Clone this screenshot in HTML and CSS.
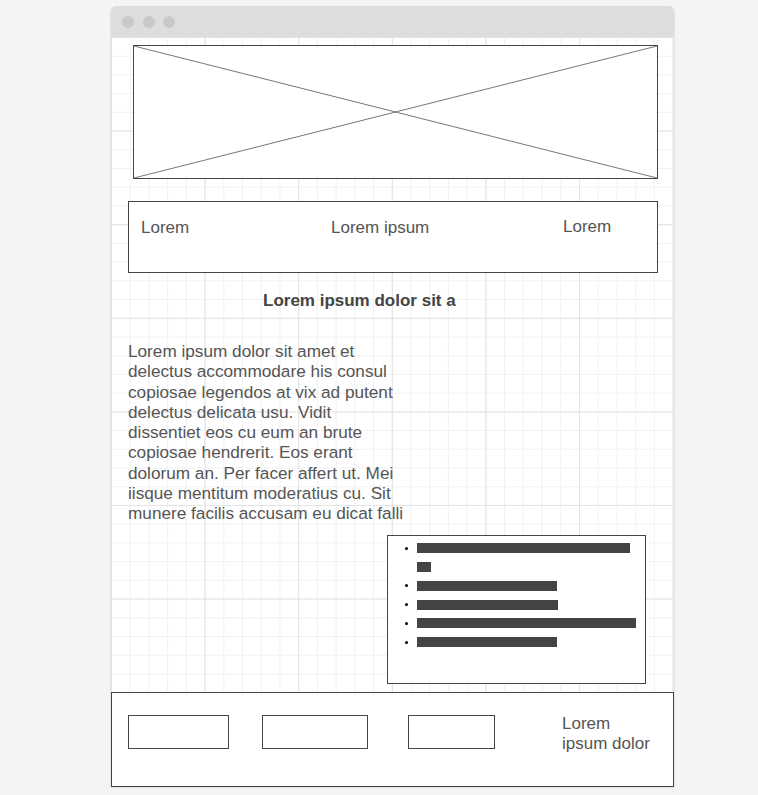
FILE: index.html
```html
<!DOCTYPE html>
<html lang="en">
<head>
<meta charset="utf-8">
<title>Wireframe</title>
<link rel="stylesheet" href="styles.css">
</head>
<body>
<div class="window">
  <div class="titlebar">
    <span class="dot"></span><span class="dot"></span><span class="dot"></span>
  </div>
  <div class="canvas">
    <div class="image-ph">
      <svg viewBox="0 0 100 100" preserveAspectRatio="none" aria-hidden="true">
        <line x1="0" y1="0" x2="100" y2="100" vector-effect="non-scaling-stroke"/>
        <line x1="100" y1="0" x2="0" y2="100" vector-effect="non-scaling-stroke"/>
      </svg>
    </div>
    <nav class="nav">
      <span class="nav-a">Lorem</span>
      <span class="nav-b">Lorem ipsum</span>
      <span class="nav-c">Lorem</span>
    </nav>
    <h1 class="heading">Lorem ipsum dolor sit a</h1>
    <p class="para">Lorem ipsum dolor sit amet et<br>delectus accommodare his consul<br>copiosae legendos at vix ad putent<br>delectus delicata usu. Vidit<br>dissentiet eos cu eum an brute<br>copiosae hendrerit. Eos erant<br>dolorum an. Per facer affert ut. Mei<br>iisque mentitum moderatius cu. Sit<br>munere facilis accusam eu dicat falli</p>
    <ul class="list">
      <li><div class="bars"><span class="bar" style="width:213px"></span><span class="bar" style="width:14px"></span></div></li>
      <li><div class="bars"><span class="bar" style="width:140px"></span></div></li>
      <li><div class="bars"><span class="bar" style="width:141px"></span></div></li>
      <li><div class="bars"><span class="bar" style="width:219px"></span></div></li>
      <li><div class="bars"><span class="bar" style="width:140px"></span></div></li>
    </ul>
  </div>
  <footer class="footer">
    <div class="fbox fbox-1"></div>
    <div class="fbox fbox-2"></div>
    <div class="fbox fbox-3"></div>
    <div class="ftext">Lorem ipsum dolor</div>
  </footer>
</div>
</body>
</html>
```
FILE: styles.css
```css
* { box-sizing: border-box; }
html, body { margin: 0; padding: 0; }
body {
  background: #f4f4f4;
  font-family: "Liberation Sans", Arial, sans-serif;
  color: #555;
  width: 758px;
  height: 795px;
  overflow: hidden;
}
.window {
  width: 565px;
  margin: 6px 0 0 110px;
  border: 1px solid #e4e4e4;
  border-top: 0;
  border-radius: 6px 6px 0 0;
  background: #fff;
  display: flex;
  flex-direction: column;
}
.titlebar {
  height: 31px;
  background: #dddddd;
  border-radius: 5px 5px 0 0;
  display: flex;
  align-items: center;
  gap: 8.7px;
  padding-left: 11px;
}
.dot {
  width: 12px;
  height: 12px;
  border-radius: 50%;
  background: #c9c9c9;
}
.canvas {
  height: 655px;
  display: flex;
  flex-direction: column;
  align-items: flex-start;
  background-color: #fff;
  background-image:
    linear-gradient(to right, #e3e3e3 1px, transparent 1px),
    linear-gradient(to bottom, #e3e3e3 1px, transparent 1px),
    linear-gradient(to right, #f1f1f1 1px, transparent 1px),
    linear-gradient(to bottom, #f1f1f1 1px, transparent 1px);
  background-size: 93.6px 93.6px, 93.6px 93.6px, 18.72px 18.72px, 18.72px 18.72px;
  background-position: 0 0;
}
.image-ph {
  margin: 8px 0 0 22px;
  width: 525px;
  height: 134px;
  border: 1px solid #444;
  background: #fff;
}
.image-ph svg {
  display: block;
  width: 100%;
  height: 100%;
}
.image-ph line {
  stroke: #777;
  stroke-width: 1;
}
.nav {
  margin: 22px 0 0 17px;
  width: 530px;
  height: 72px;
  border: 1px solid #444;
  background: #fff;
  display: flex;
  align-items: flex-start;
  padding: 16px 0 0 12px;
  font-size: 17px;
  line-height: 20px;
}
.nav-a { width: 190px; }
.nav-b { width: 232px; }
.nav-c { margin-top: -1px; }
.heading {
  margin: 19px 0 0 152px;
  font-size: 17px;
  line-height: 18px;
  font-weight: bold;
  color: #444;
}
.para {
  margin: 31px 0 0 17px;
  font-size: 17.2px;
  line-height: 20.25px;
  white-space: nowrap;
}
.list {
  margin: 12px 0 0 276px;
  width: 259px;
  height: 149px;
  border: 1px solid #444;
  background: #fff;
  list-style: none;
  padding: 2.6px 6px 0 17px;
}
.list li {
  display: flex;
  align-items: flex-start;
}
.list li::before {
  content: "";
  flex: none;
  width: 3px;
  height: 3px;
  border-radius: 50%;
  background: #000;
  margin: 8px 9px 0 0;
}
.bars {
  flex: 1;
  display: flex;
  flex-wrap: wrap;
  column-gap: 4px;
}
.bar {
  display: block;
  height: 10px;
  margin: 4.4px 0;
  background: #444;
}
.footer {
  height: 95px;
  border: 1px solid #444;
  display: flex;
  align-items: flex-start;
  padding: 22px 0 0 16px;
  background: #fff;
}
.fbox {
  height: 34px;
  border: 1px solid #444;
  flex: none;
}
.fbox-1 { width: 101px; }
.fbox-2 { width: 106px; margin-left: 33px; }
.fbox-3 { width: 87px; margin-left: 40px; }
.ftext {
  margin: -1px 0 0 67px;
  width: 92px;
  font-size: 17px;
  line-height: 20px;
}
```
